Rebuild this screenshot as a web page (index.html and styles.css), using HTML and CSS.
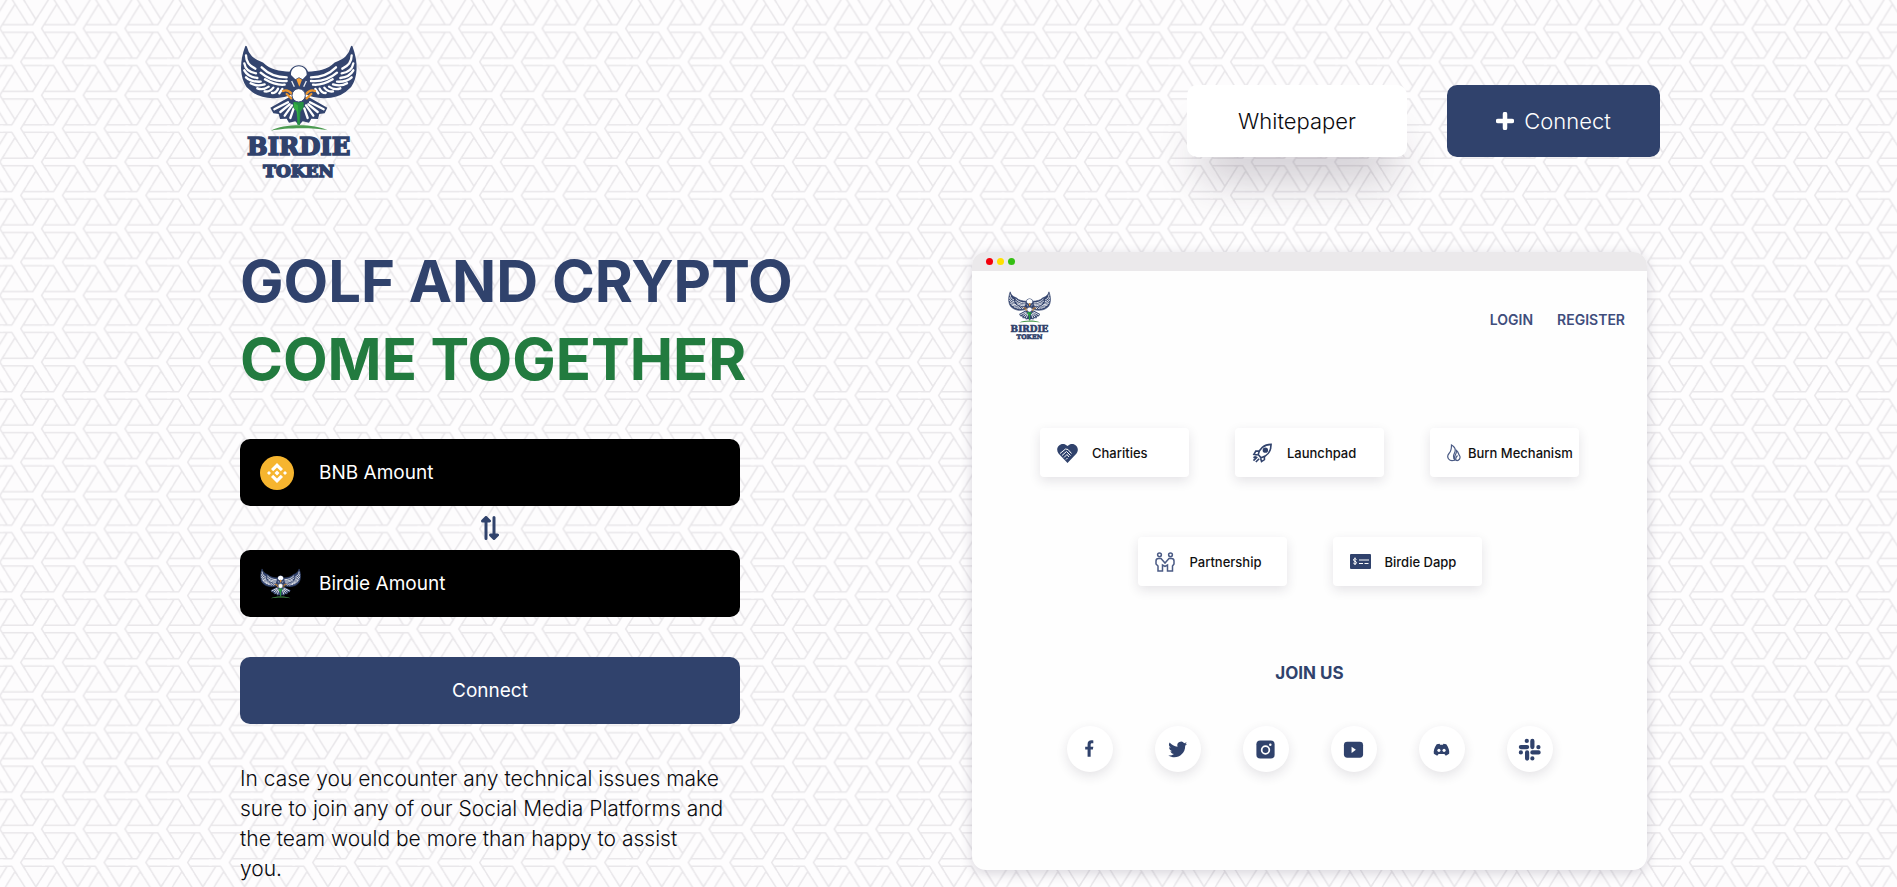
FILE: index.html
```html
<!DOCTYPE html>
<html lang="en">
<head>
<meta charset="utf-8">
<meta name="viewport" content="width=device-width, initial-scale=1">
<title>Birdie Token</title>
<link rel="stylesheet" href="styles.css">
</head>
<body>
<svg class="backdrop" aria-hidden="true">
  <defs>
    <pattern id="weave" patternUnits="userSpaceOnUse" width="41.72" height="66.72" patternTransform="translate(36 28.5)">
      <g fill="none">
        <path id="rows" class="weave-edge" d="M-42 0H84M-42 33.36H84M-42 66.72H84"/>
        <path id="slants" class="weave-edge weave-slant" d="M-20.86 -33.36L62.58 100.08M-20.86 33.36L20.86 100.08M0 -66.72L62.58 33.36M62.58 -33.36L-20.86 100.08M20.86 -33.36L-20.86 33.36M62.58 33.36L20.86 100.08"/>
        <path class="weave-band" d="M-42 0H84M-42 33.36H84M-42 66.72H84"/>
        <path class="weave-band weave-slant" d="M-20.86 -33.36L62.58 100.08M-20.86 33.36L20.86 100.08M0 -66.72L62.58 33.36M62.58 -33.36L-20.86 100.08M20.86 -33.36L-20.86 33.36M62.58 33.36L20.86 100.08"/>
      </g>
      <g fill="none">
        <g id="knot">
          <path class="weave-edge" d="M-12 0H0"/><path class="weave-edge weave-slant" d="M6.4-10.2L0 0L6.4 10.2"/>
          <path class="weave-band" d="M-15 0H0"/><path class="weave-band weave-slant" d="M8.5-13.6L0 0L8.5 13.6"/>
        </g>
        <use href="#knot" x="41.72"/><use href="#knot" y="66.72"/><use href="#knot" x="41.72" y="66.72"/><use href="#knot" x="20.86" y="33.36"/>
      </g>
    </pattern>
    <symbol id="bird" viewBox="60 45 360 260">
      <g id="wing" stroke="#34456f" stroke-width="5" stroke-linejoin="round">
        <path fill="#34456f" d="M78 50C84 76 98 88 128 100C150 122 180 126 212 128L216 190C188 206 130 208 98 184L82 170C62 142 60 98 78 50Z"/>
        <path fill="none" stroke="#fff" stroke-width="7" stroke-linecap="round" d="M78 76C78 96 88 108 106 116M73 100C76 118 90 127 108 130M73 121C81 136 94 142 112 144M78 142C88 152 102 156 122 155M92 160C104 167 118 168 134 163M112 175C124 180 136 177 146 170M134 184C146 186 154 181 160 173M156 189C165 189 171 183 174 176M178 190L187 177M125 112C145 132 170 142 200 142M122 128C145 148 170 156 200 153M135 148C155 160 175 166 194 164"/>
      </g>
      <use href="#wing" transform="matrix(-1 0 0 1 473 0)"/>
      <path fill="#34456f" d="M207 202L151 233L160 250L176 252L180 267L200 266L207 278L226 274L237 286L248 274L267 278L274 266L294 267L298 252L314 250L322 233L267 202Z"/>
      <path fill="none" stroke="#fff" stroke-width="7" stroke-linecap="round" d="M204 217L163 238M209 223L181 246M216 226L194 257M221 235L211 264M270 217L311 238M265 223L293 246M258 226L280 257M253 235L263 264"/>
      <path fill="#249143" d="M220 216H251V231L241 246L240 284L232 284L230 244L220 233Z"/>
      <path fill="#36ad43" d="M222 218L234 226L236 280L230 243L222 233Z"/>
      <path fill="#34456f" d="M207 142C203 94 270 94 266 142L271 176L250 190H222L202 176Z"/>
      <path fill="#fff" d="M213 135C210 100 263 100 260 135L248 148L237 142L226 148Z"/>
      <path stroke="#e9edf6" stroke-width="4" d="M215 153L223 170M259 153L251 170"/>
      <path fill="#f8a238" d="M229 148L237 144L246 149L238 170Z"/>
      <path fill="none" stroke="#e99530" stroke-width="7" stroke-linecap="round" d="M189 183C201 178 209 184 215 191M200 192L214 205M285 183C273 178 265 184 259 191M274 192L260 205"/>
      <circle cx="236" cy="196" r="20" fill="#fff" stroke="#34456f" stroke-width="3"/>
      <path fill="#4c9b50" d="M153 302C190 282 279 280 323 301C280 292 196 293 153 302Z"/>
    </symbol>
    <symbol id="logo" viewBox="60 45 360 456">
      <use href="#bird" x="60" y="45" width="360" height="260"/>
      <g class="logo-text"><text x="236" y="376" font-size="73">BIRDIE</text><text x="236" y="440" font-size="51">TOKEN</text></g>
    </symbol>
  </defs>
  <rect width="100%" height="100%" fill="url(#weave)"/>
</svg>

<div class="page">
  <header class="site-header">
    <a class="brand" href="#" aria-label="Birdie Token"><svg class="brand-logo"><use href="#logo"/></svg></a>
    <nav class="header-actions">
      <a class="btn btn-light" href="#">Whitepaper</a>
      <button class="btn btn-primary" type="button">
        <svg class="plus" viewBox="0 0 18 18" aria-hidden="true"><path d="M9 2V16M2 9H16" stroke="#fff" stroke-width="4.500" stroke-linecap="round"/></svg>Connect
      </button>
    </nav>
  </header>

  <main class="hero">
    <section class="swap">
      <h1 class="headline">GOLF AND CRYPTO <span class="headline-accent">COME TOGETHER</span></h1>
      <form class="swap-form">
        <label class="field">
          <svg class="coin" viewBox="0 0 34 34" aria-hidden="true"><circle cx="17" cy="17" r="17" fill="#f6b52f"/><path fill="#fff" d="M17 7L23 13L20.800 15.200L17 11.400L13.200 15.200L11 13ZM17 27L23 21L20.800 18.800L17 22.600L13.200 18.800L11 21ZM17 14.500L19.500 17L17 19.500L14.500 17ZM9 15L11 17L9 19L7 17ZM25 15L27 17L25 19L23 17Z"/></svg>
          <input type="text" placeholder="BNB Amount" aria-label="BNB Amount">
        </label>
        <button class="switch" type="button" aria-label="Swap direction"><svg viewBox="0 0 18 24" aria-hidden="true"><path d="M5 22.500V3M1.500 5L5 1.500L8.500 5ZM13 1.500V21M9.500 19L13 22.500L16.500 19Z" fill="#30426c" stroke="#30426c" stroke-width="3" stroke-linejoin="round" stroke-linecap="round"/></svg></button>
        <label class="field">
          <svg class="coin coin-bird" aria-hidden="true"><use href="#bird"/></svg>
          <input type="text" placeholder="Birdie Amount" aria-label="Birdie Amount">
        </label>
        <button class="submit" type="button">Connect</button>
      </form>
      <p class="note">In case you encounter any technical issues make sure to join any of our Social Media Platforms and the team would be more than happy to assist<br>you.</p>
    </section>

    <section class="window">
      <div class="window-bar"><i class="dot dot-red"></i><i class="dot dot-yellow"></i><i class="dot dot-green"></i></div>
      <div class="window-head">
        <svg class="window-logo" role="img" aria-label="Birdie Token"><use href="#logo"/></svg>
        <nav class="window-nav"><a href="#">LOGIN</a><a href="#">REGISTER</a></nav>
      </div>
      <div class="cards">
        <a class="card" href="#"><svg class="card-icon" viewBox="0 0 21 20"><path fill="#30426c" d="M10.500 20L1.500 10.500C-3 4 5-2.500 10.500 3C16-2.500 24 4 19.500 10.500Z"/><path d="M3 10.500L8.500 6L11 6.500L14.500 10.500M5 12.500L9.500 8.500L13.500 12.500M7 14.500L10 11.500L12 14M9 16.500L10.500 15" fill="none" stroke="#fff" stroke-width="1"/></svg>Charities</a>
        <a class="card" href="#"><svg class="card-icon" viewBox="0 0 21 21" fill="none" stroke="#30426c" stroke-width="1.700"><path d="M6 12C7 6 12 1.500 19.500 1.500C19.500 9 15 14 9 15.500Z"/><circle cx="13.500" cy="7.500" r="2" fill="#30426c"/><path d="M7 8.500H3.500L1.500 12L5.500 12.500M12.500 14.500V17.500L9.500 19.500L8.500 16M5 14.500L1 18.500M7 16.500L3.500 20M3.500 14L1 15.500"/></svg>Launchpad</a>
        <a class="card card-tight" href="#"><svg class="card-icon card-icon-slim" viewBox="0 0 14 18" fill="none" stroke="#4b5b85" stroke-width="1.200"><path d="M8 16C2 18.500-1 13 2 9.500C4.500 7 4.500 4.500 4.500 1C8 3 9 6 7.500 9C6 12 6 14 8 16Z"/><path d="M8 16.500C5.500 13 10 10.500 9.500 6.500C12 8.500 11 10 12.500 11.500C14 14 12 17 9.500 16.500C8 15 9 13 10.500 11.500"/></svg>Burn Mechanism</a>
        <a class="card" href="#"><svg class="card-icon" viewBox="0 0 21 20" fill="none" stroke="#4b5b85" stroke-width="1.500"><circle cx="4.500" cy="2.800" r="1.900"/><circle cx="15.500" cy="2.800" r="1.900"/><path d="M3 19V14L1 12V9C1 7.500 2 6.500 3.500 6.500H6L10 11L14 6.500H16.500C18 6.500 19 7.500 19 9V12L17.500 14V19H12.500V13L10 14.500L7.500 13V19Z"/></svg>Partnership</a>
        <a class="card" href="#"><svg class="card-icon" viewBox="0 0 21 20"><rect y="2" width="21" height="15" rx="1" fill="#30426c"/><path d="M9 8H19M9 11.500H13M14.500 11.500H18.500M6.500 7.500C5.500 6.300 3.500 6.500 3.500 8C3.500 9.500 6.500 9 6.500 10.700C6.500 12.300 4 12.300 3.300 11M5 5.500V13" fill="none" stroke="#fff" stroke-width="1"/></svg>Birdie Dapp</a>
      </div>
      <h2 class="join">JOIN US</h2>
      <div class="socials">
        <a class="social" href="#" aria-label="Facebook"><svg viewBox="0 0 24 24"><path d="M10 19.500V12H7.500V9H10V6.500C10 3 12 2 16 2.500V5.600C13.500 5.300 13.200 5.800 13.200 7.200V9H16L15.500 12H13.200V19.500Z"/></svg></a>
        <a class="social" href="#" aria-label="Twitter"><svg viewBox="0 0 24 24"><path d="M22 6C21.300 6.300 20.600 6.500 19.800 6.600C20.600 6.100 21.200 5.300 21.500 4.400C20.700 4.900 19.900 5.200 19 5.400A4 4 0 0 0 12 9C8.700 8.800 5.700 7.200 3.800 4.800A4 4 0 0 0 5 10.200C4.400 10.100 3.800 10 3.200 9.700C3.200 11.700 4.600 13.300 6.400 13.700C5.800 13.900 5.200 13.900 4.600 13.800C5.100 15.400 6.600 16.500 8.300 16.600A8 8 0 0 1 2.400 18.200C10.500 23.200 20 17.500 20 8.600V8C20.800 7.500 21.500 6.800 22 6Z"/></svg></a>
        <a class="social" href="#" aria-label="Instagram"><svg viewBox="0 0 24 24"><rect x="2.500" y="2.500" width="19" height="19" rx="4"/><circle cx="12" cy="12.500" r="4" fill="none" stroke="#fff" stroke-width="1.800"/><circle cx="17" cy="7" r="1.300" fill="#fff"/></svg></a>
        <a class="social" href="#" aria-label="YouTube"><svg viewBox="0 0 24 24"><rect x="2" y="4" width="20" height="16.500" rx="3.500"/><path fill="#fff" d="M10 9L14.500 12.300L10 15.600Z"/></svg></a>
        <a class="social" href="#" aria-label="Discord"><svg viewBox="0 0 24 24"><path d="M7 6.500L10 6L10.500 7H13.500L14 6L17 6.500C19.500 10 20.500 13.500 20 16.500L16.500 18.500L15 16.800H9L7.500 18.500L4 16.500C3.500 13.500 4.500 10 7 6.500Z"/><ellipse cx="9.300" cy="12.800" rx="1.600" ry="1.700" fill="#fff"/><ellipse cx="14.700" cy="12.800" rx="1.600" ry="1.700" fill="#fff"/></svg></a>
        <a class="social" href="#" aria-label="Slack"><svg viewBox="0 0 24 24"><path fill="none" stroke="#30426c" stroke-width="4.400" stroke-linecap="round" d="M15 3V9.500M3 9.500H9.500M9.500 15V21.500M15 15H21.500M9.200 3V3.100M21.300 9.500V9.600M3 15V15.100M15 21.300V21.400"/></svg></a>
      </div>
    </section>
  </main>
</div>
</body>
</html>
```
FILE: styles.css
```css
* { box-sizing: border-box; }

body {
  margin: 0;
  color: #0b0b0f;
  background: #fdfcfd;
  font-family: Inter, "Open Sans", sans-serif;
}

a { color: inherit; text-decoration: none; }
button { border: 0; font: inherit; cursor: pointer; }

.backdrop {
  position: absolute;
  inset: 0;
  z-index: -1;
  width: 100%;
  height: 100%;
}
.weave-edge { stroke: #e9e7ea; stroke-width: 9px; stroke-linejoin: round; }
.weave-band { stroke: #fefdfe; stroke-width: 6px; stroke-linejoin: round; }
.weave-edge.weave-slant { stroke-width: 11px; }
.weave-band.weave-slant { stroke-width: 8px; }

.logo-text {
  font-family: "DejaVu Serif", serif;
  font-weight: bold;
  text-anchor: middle;
  fill: #30426c;
  stroke: #30426c;
  stroke-width: 5px;
}

.page {
  max-width: 1471px;
  margin: 0 auto;
  padding: 0 24px 0 27px;
}

.site-header {
  display: flex;
  align-items: center;
  justify-content: space-between;
  padding: 45px 0;
}
.brand-logo { display: block; width: 120px; height: 152px; }
.header-actions { display: flex; gap: 40px; }

.btn {
  display: flex;
  align-items: center;
  justify-content: center;
  gap: 10px;
  height: 72px;
  border-radius: 10px;
  font-size: 22px;
  font-weight: 300;
}
.btn-light {
  min-width: 220px;
  background: #fff;
  box-shadow: 0 36px 44px -14px rgba(40, 30, 50, 0.24);
}
.btn-primary { min-width: 213px; color: #fff; background: #30426c; }
.plus { width: 18px; height: 18px; }

.hero {
  display: grid;
  grid-template-columns: 732fr 675fr;
  align-items: start;
  padding-right: 13px;
}

.headline {
  margin: 0 0 41px;
  color: #30426c;
  font-size: 58px;
  font-weight: 700;
  line-height: 78px;
}
.headline-accent { display: block; color: #227b3f; }

.swap-form { display: flex; flex-direction: column; max-width: 500px; }
.field {
  display: flex;
  align-items: center;
  height: 67px;
  padding: 0 20px;
  border-radius: 10px;
  background: #000;
}
.coin { flex: none; width: 34px; height: 34px; margin-right: 25px; }
.coin-bird { width: 42px; height: 31px; margin-right: 17px; }
.field input {
  flex: 1;
  min-width: 0;
  padding: 0;
  border: 0;
  outline: 0;
  color: #fff;
  background: transparent;
  font: inherit;
  font-size: 19px;
}
.field input::placeholder { color: #fff; opacity: 1; }
.switch {
  align-self: center;
  height: 44px;
  padding: 10px;
  background: transparent;
}
.switch svg { display: block; width: 18px; height: 24px; }
.submit {
  height: 67px;
  margin-top: 40px;
  border-radius: 10px;
  color: #fff;
  background: #30426c;
  font-size: 19px;
}
.note {
  max-width: 500px;
  margin: 40px 0 0;
  font-size: 21px;
  font-weight: 300;
  line-height: 30px;
}

.window {
  margin-top: 10px;
  padding-bottom: 98px;
  overflow: hidden;
  border-radius: 14px;
  background: #fefefe;
  box-shadow: 0 3px 12px rgba(40, 30, 60, 0.18);
}
.window-bar {
  display: flex;
  align-items: center;
  gap: 4px;
  height: 19px;
  padding-left: 14px;
  background: #ebe9eb;
}
.dot { width: 7px; height: 7px; border-radius: 50%; }
.dot-red { background: #f3000c; }
.dot-yellow { background: #ffe000; }
.dot-green { background: #35bf13; }

.window-head {
  display: flex;
  align-items: center;
  justify-content: space-between;
  padding: 20px 22px 0 36px;
}
.window-logo { width: 44px; height: 56px; }
.window-nav {
  display: flex;
  gap: 24px;
  color: #3f4d7c;
  font-size: 14px;
  font-weight: 600;
}

.cards {
  display: flex;
  flex-wrap: wrap;
  justify-content: center;
  gap: 60px 46px;
  padding: 81px 60px 0;
}
.card {
  display: flex;
  align-items: center;
  gap: 14px;
  width: 149px;
  height: 49px;
  padding-left: 17px;
  border-radius: 4px;
  background: #fff;
  box-shadow: 0 4px 12px rgba(40, 30, 60, 0.12);
  color: #111;
  font-size: 13px;
  font-weight: 500;
  white-space: nowrap;
}
.card-tight { gap: 7px; }
.card-icon { flex: none; width: 21px; height: 20px; }
.card-icon-slim { width: 14px; height: 18px; }

.join {
  margin: 75px 0 0;
  color: #30426c;
  font-size: 17px;
  font-weight: 700;
  line-height: 24px;
  text-align: center;
}
.socials {
  display: flex;
  flex-wrap: wrap;
  justify-content: center;
  gap: 42px;
  padding-top: 41px;
}
.social {
  display: grid;
  place-items: center;
  width: 46px;
  height: 46px;
  border-radius: 50%;
  background: #fff;
  box-shadow: 0 4px 12px rgba(40, 30, 60, 0.12);
}
.social svg { width: 23px; height: 23px; fill: #30426c; }

@media (max-width: 1000px) {
  .hero { grid-template-columns: 1fr; gap: 40px; padding-right: 0; }
  .backdrop { position: fixed; }
}
```
